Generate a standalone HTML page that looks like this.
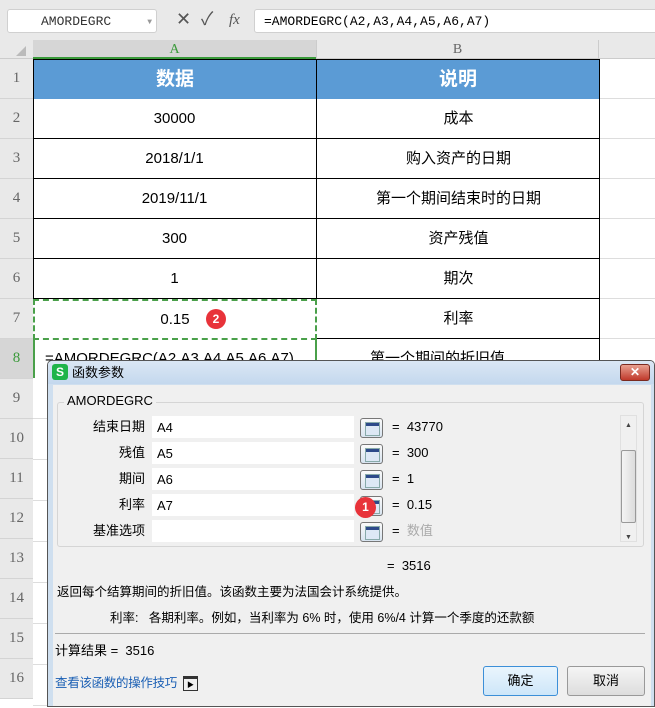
<!DOCTYPE html>
<html><head><meta charset="utf-8"><style>
*{margin:0;padding:0;box-sizing:border-box}
body{width:655px;height:707px;overflow:hidden;background:#fff;font-family:"Liberation Sans","Noto Sans CJK SC",sans-serif;position:relative;font-size:14px;color:#000}
.a{position:absolute;line-height:16px}
.cell{position:absolute;display:flex;align-items:center;justify-content:center;font-size:15px;line-height:18px}
.rh{position:absolute;left:0;width:33px;background:#e9e9e9;color:#666;font-family:"Liberation Serif",serif;font-size:15px;display:flex;align-items:center;justify-content:center;border-bottom:1px solid #d4d4d4}
.lab{position:absolute;width:90px;left:55px;text-align:right;font-size:13px;line-height:16px}
.inp{position:absolute;left:152px;width:202px;height:22px;background:#fff;font-size:13px;padding:4px 5px;line-height:15px}
.btn{position:absolute;left:360px;width:23px;height:20px;border:1px solid #777;border-radius:3px;background:linear-gradient(#fafafa,#d8e4f0)}
.btn:after{content:"";position:absolute;left:4px;top:3px;width:13px;height:12px;background:linear-gradient(#2d4a8a 0 3px,#dde8f5 3px);border:1px solid #8aa}
.val{position:absolute;left:392px;font-size:13px;line-height:16px}
</style></head><body>
<div class="a" style="left:0;top:0;width:655px;height:40px;background:#e9e9e9"></div>
<div class="a" style="left:7px;top:9px;width:150px;height:24px;background:#fff;border:1px solid #d0d0d0;border-radius:3px;font-family:'Liberation Mono',monospace;font-size:13px;color:#333;padding:4px 0 0 33px">AMORDEGRC<span style="position:absolute;right:4px;top:5px;font-size:8px;color:#999">▼</span></div>
<div class="a" style="left:176px;top:11px;font-size:18px;color:#555">✕</div>
<div class="a" style="left:201px;top:11px;font-size:18px;color:#555">✓</div>
<div class="a" style="left:229px;top:12px;font-size:15px;color:#555;font-style:italic;font-family:'Liberation Serif',serif">fx</div>
<div class="a" style="top:9px;width:460px;height:24px;left:254px;background:#fff;border:1px solid #d0d0d0;border-radius:3px;font-family:'Liberation Mono',monospace;font-size:13px;padding:4px 0 0 9px">=AMORDEGRC(A2,A3,A4,A5,A6,A7)</div>
<div class="a" style="left:0;top:40px;width:655px;height:19px;background:#e9e9e9;border-bottom:1px solid #ccc"></div>
<div class="a" style="left:33px;top:40px;width:283px;height:19px;background:#d6d6d6;border-bottom:2px solid #3a9a3a;color:#3a9a3a;text-align:center;font-family:'Liberation Serif',serif;font-size:14px;line-height:19px">A</div>
<div class="a" style="left:316px;top:40px;width:283px;height:19px;border-left:1px solid #ccc;border-right:1px solid #ccc;text-align:center;color:#666;font-family:'Liberation Serif',serif;font-size:14px;line-height:19px">B</div>
<div class="a" style="left:16px;top:46px;width:0;height:0;border-left:10px solid transparent;border-bottom:10px solid #bbb"></div>
<div class="rh" style="top:59px;height:40px">1</div>
<div class="rh" style="top:99px;height:40px">2</div>
<div class="rh" style="top:139px;height:40px">3</div>
<div class="rh" style="top:179px;height:40px">4</div>
<div class="rh" style="top:219px;height:40px">5</div>
<div class="rh" style="top:259px;height:40px">6</div>
<div class="rh" style="top:299px;height:40px">7</div>
<div class="rh" style="top:339px;height:40px;background:#d6d6d6;color:#3a9a3a">8</div>
<div class="rh" style="top:379px;height:40px">9</div>
<div class="rh" style="top:419px;height:40px">10</div>
<div class="rh" style="top:459px;height:40px">11</div>
<div class="rh" style="top:499px;height:40px">12</div>
<div class="rh" style="top:539px;height:40px">13</div>
<div class="rh" style="top:579px;height:40px">14</div>
<div class="rh" style="top:619px;height:40px">15</div>
<div class="rh" style="top:659px;height:40px">16</div>
<div class="a" style="left:599px;top:59px;width:56px;height:300px;background:repeating-linear-gradient(#fff 0 39px,#ddd 39px 40px)"></div>
<div class="cell" style="left:33px;top:59px;width:284px;height:41px;background:#5b9bd5;border:1px solid #000;color:#fff;font-weight:bold;font-size:19px">数据</div>
<div class="cell" style="left:316px;top:59px;width:284px;height:41px;background:#5b9bd5;border:1px solid #000;color:#fff;font-weight:bold;font-size:19px">说明</div>
<div class="a" style="left:33px;top:99px;width:567px;height:241px;border-left:1px solid #000;border-right:1px solid #000;background:repeating-linear-gradient(#fff 0 39px,#000 39px 40px)"></div>
<div class="a" style="left:316px;top:99px;width:1px;height:270px;background:#000"></div>
<div class="cell" style="left:33px;top:99px;width:283px;height:40px">30000</div>
<div class="cell" style="left:317px;top:99px;width:283px;height:40px">成本</div>
<div class="cell" style="left:33px;top:139px;width:283px;height:40px">2018/1/1</div>
<div class="cell" style="left:317px;top:139px;width:283px;height:40px">购入资产的日期</div>
<div class="cell" style="left:33px;top:179px;width:283px;height:40px">2019/11/1</div>
<div class="cell" style="left:317px;top:179px;width:283px;height:40px">第一个期间结束时的日期</div>
<div class="cell" style="left:33px;top:219px;width:283px;height:40px">300</div>
<div class="cell" style="left:317px;top:219px;width:283px;height:40px">资产残值</div>
<div class="cell" style="left:33px;top:259px;width:283px;height:40px">1</div>
<div class="cell" style="left:317px;top:259px;width:283px;height:40px">期次</div>
<div class="cell" style="left:33px;top:299px;width:284px;height:41px;background:#fff;border:2px dashed #4aa04a">0.15</div>
<div class="a" style="left:206px;top:309px;width:20px;height:20px;border-radius:50%;background:#e8333a;color:#fff;font-size:12px;font-weight:bold;text-align:center;line-height:20px">2</div>
<div class="cell" style="left:317px;top:299px;width:283px;height:40px">利率</div>
<div class="a" style="left:599px;top:339px;width:1px;height:30px;background:#000"></div>
<div class="a" style="left:33px;top:339px;width:284px;height:42px;border:2px solid #4aa04a;border-top:none;font-size:15px;padding:12px 0 0 10px;white-space:nowrap;overflow:hidden">=AMORDEGRC(A2,A3,A4,A5,A6,A7)</div>
<div class="a" style="left:370px;top:351px;font-size:15px">第一个期间的折旧值</div>
<div class="a" style="left:33px;top:378px;width:14px;height:330px;background:repeating-linear-gradient(#fff 0 40px,#ddd 40px 41px)"></div>
<div class="a" style="left:47px;top:360px;width:608px;height:347px;border:1px solid #555;border-radius:5px 5px 0 0;background:#cfdfef;overflow:hidden">
 <div class="a" style="left:0;top:0;width:608px;height:23px;background:linear-gradient(#dbe7f4,#c4d8ee)"></div>
 <div class="a" style="left:4px;top:3px;width:16px;height:16px;background:#1fb44a;border-radius:3px;color:#fff;font-size:12px;font-weight:bold;text-align:center;line-height:16px">S</div>
 <div class="a" style="left:24px;top:4px;font-size:13px">函数参数</div>
 <div class="a" style="left:572px;top:3px;width:30px;height:17px;background:linear-gradient(#e8a090,#c0392b);border:1px solid #7a2a20;border-radius:3px;color:#fff;font-weight:bold;font-size:12px;text-align:center;line-height:15px">✕</div>
 <div class="a" style="left:5px;top:24px;width:598px;height:323px;background:#f0f0f0"></div>
</div>
<div class="a" style="left:57px;top:402px;width:587px;height:145px;border:1px solid #d5d5d5;border-radius:3px"></div>
<div class="a" style="left:64px;top:393px;background:#f0f0f0;padding:0 3px;font-size:13px">AMORDEGRC</div>
<div class="lab" style="top:419px">结束日期</div><div class="inp" style="top:416px">A4</div><div class="btn" style="top:418px"></div><div class="val" style="top:419px">=&nbsp; 43770</div>
<div class="lab" style="top:445px">残值</div><div class="inp" style="top:442px">A5</div><div class="btn" style="top:444px"></div><div class="val" style="top:445px">=&nbsp; 300</div>
<div class="lab" style="top:471px">期间</div><div class="inp" style="top:468px">A6</div><div class="btn" style="top:470px"></div><div class="val" style="top:471px">=&nbsp; 1</div>
<div class="lab" style="top:497px">利率</div><div class="inp" style="top:494px">A7</div><div class="btn" style="top:496px"></div><div class="val" style="top:497px">=&nbsp; 0.15</div>
<div class="lab" style="top:523px">基准选项</div><div class="inp" style="top:520px"></div><div class="btn" style="top:522px"></div><div class="val" style="top:523px">=&nbsp; <span style="color:#aaa">数值</span></div>
<div class="a" style="left:355px;top:497px;width:21px;height:21px;border-radius:50%;background:#e8333a;color:#fff;font-size:12px;font-weight:bold;text-align:center;line-height:21px">1</div>
<div class="a" style="left:620px;top:415px;width:17px;height:127px;background:#f0f0f0;border:1px solid #e0e0e0"></div>
<div class="a" style="left:625px;top:418px;font-size:7px;color:#444">▲</div>
<div class="a" style="left:625px;top:530px;font-size:7px;color:#444">▼</div>
<div class="a" style="left:621px;top:450px;width:15px;height:73px;background:linear-gradient(90deg,#f4f4f4,#dcdcdc);border:1px solid #999;border-radius:2px"></div>
<div class="a" style="left:387px;top:558px;font-size:13px">=&nbsp; 3516</div>
<div class="a" style="left:57px;top:584px;font-size:12.5px">返回每个结算期间的折旧值。该函数主要为法国会计系统提供。</div>
<div class="a" style="left:110px;top:610px;font-size:12.5px">利率:&nbsp;&nbsp; 各期利率。例如，当利率为 6% 时，使用 6%/4 计算一个季度的还款额</div>
<div class="a" style="left:55px;top:633px;width:590px;height:1px;background:#aaa"></div>
<div class="a" style="left:55px;top:643px;font-size:13px">计算结果 =&nbsp; 3516</div>
<div class="a" style="left:55px;top:675px;font-size:12.5px;color:#1a5fb4;letter-spacing:-0.3px">查看该函数的操作技巧</div>
<div class="a" style="left:183px;top:676px;width:15px;height:15px;border:1px solid #333;font-size:7px;padding:3px 0 0 3px;border-top-width:3px;line-height:8px">▶</div>
<div class="a" style="left:483px;top:666px;width:75px;height:30px;border:1px solid #3c8fd8;border-radius:3px;background:linear-gradient(#eaf5fd,#cde6f9);text-align:center;line-height:28px;font-size:13px">确定</div>
<div class="a" style="left:567px;top:666px;width:78px;height:30px;border:1px solid #999;border-radius:3px;background:linear-gradient(#f5f5f5,#ddd);text-align:center;line-height:28px;font-size:13px">取消</div>
</body></html>
